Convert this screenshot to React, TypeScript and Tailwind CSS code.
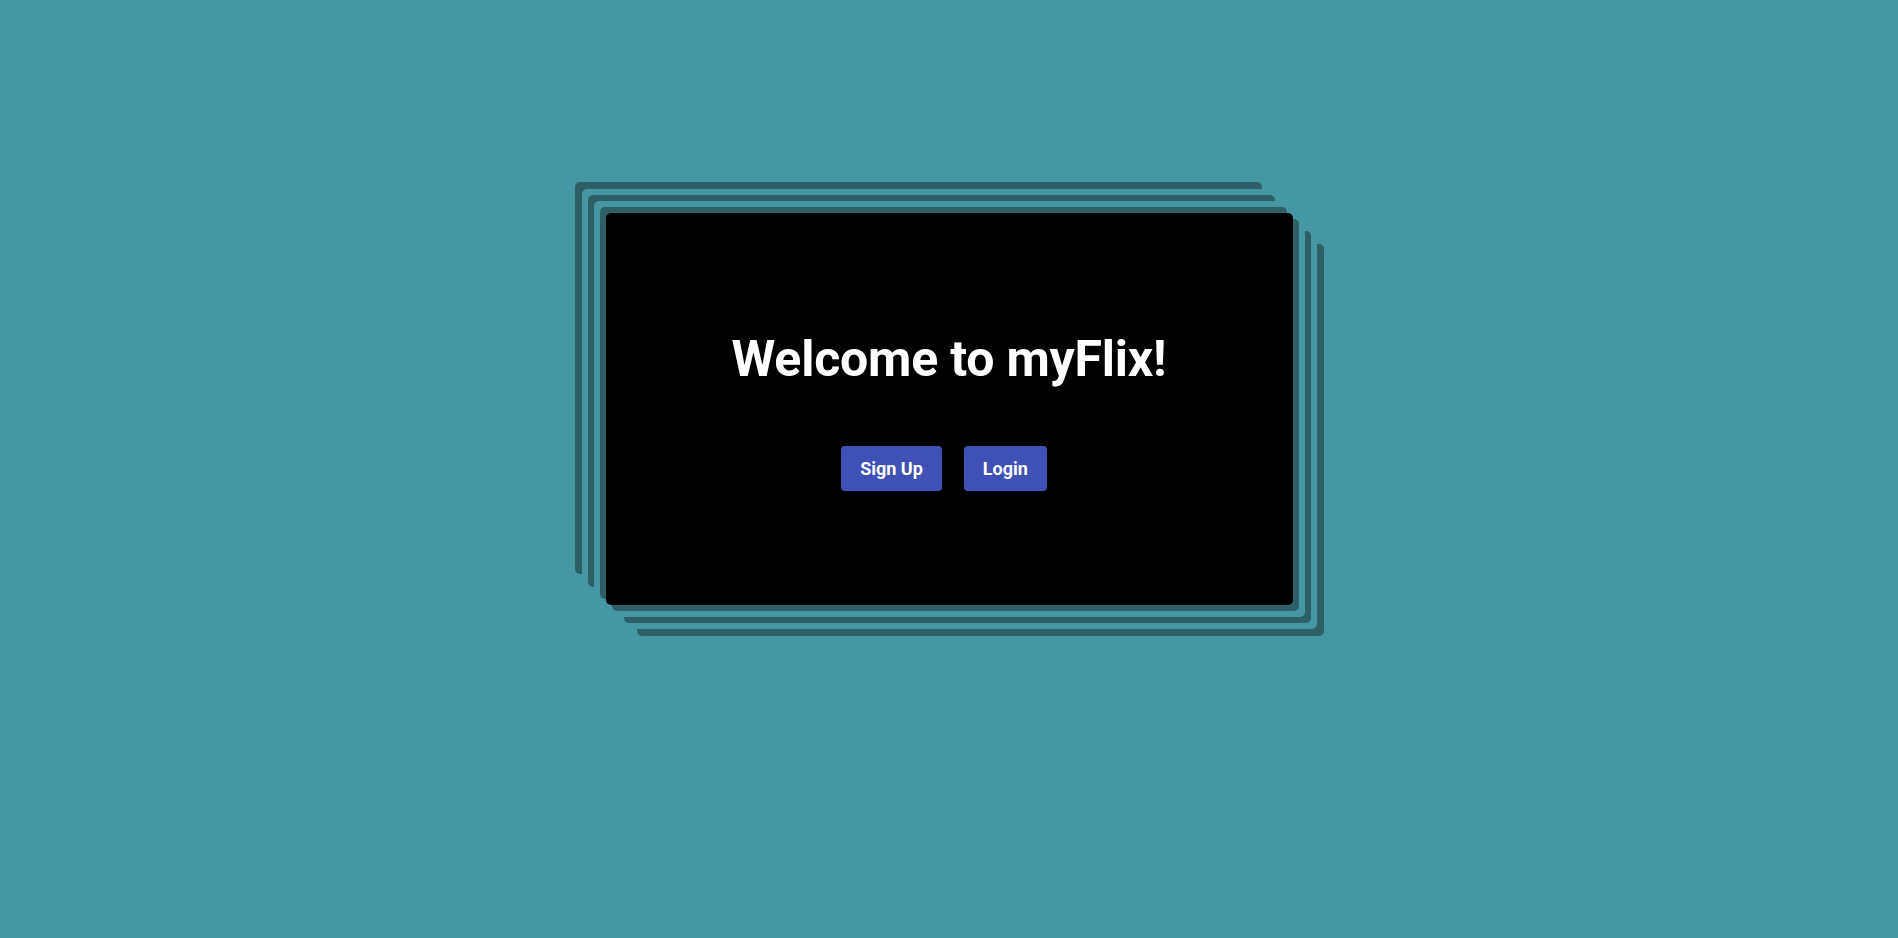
export default function App() {
  return (
    <div className="min-h-screen w-full bg-[#4597a3] font-['Roboto',sans-serif]">
      <div className="flex justify-center pt-[213px]">
        {/* Card */}
        <div className="w-[687px] h-[392px] bg-black rounded-[5px] shadow-[6px_6px_0_#2e5f66,12px_12px_0_#4597a3,18px_18px_0_#2e5f66,24px_24px_0_#4597a3,31px_31px_0_#2e5f66,-6px_-6px_0_#2e5f66,-12px_-12px_0_#4597a3,-18px_-18px_0_#2e5f66,-24px_-24px_0_#4597a3,-31px_-31px_0_#2e5f66] flex flex-col items-center pt-[117px]">
          <h1 className="text-[50px] leading-[58px] font-bold tracking-[-0.2px] text-white">Welcome to myFlix!</h1>
          <div className="flex gap-[22px] mt-[58px] pr-[10px]">
            <button className="h-[45px] px-[19px] rounded-[4px] bg-[#3f51b5] text-white text-[18px] font-bold">Sign Up</button>
            <button className="h-[45px] px-[19px] rounded-[4px] bg-[#3f51b5] text-white text-[18px] font-bold">Login</button>
          </div>
        </div>
      </div>
    </div>
  );
}
